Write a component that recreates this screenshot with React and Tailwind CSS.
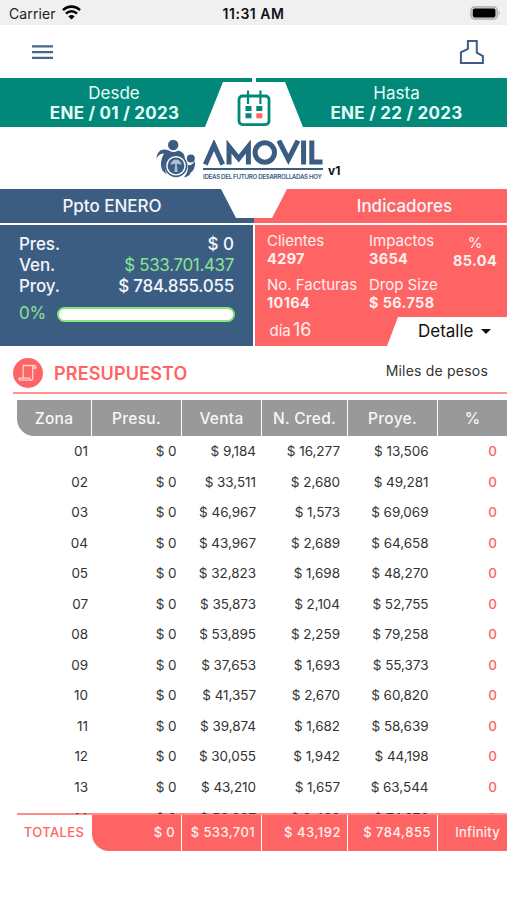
import React from "react";

const COLS = "grid grid-cols-[74px_89px_79px_85px_89px_69px] gap-x-px";

const rows = [
  ["01", "0", "9,184", "16,277", "13,506"],
  ["02", "0", "33,511", "2,680", "49,281"],
  ["03", "0", "46,967", "1,573", "69,069"],
  ["04", "0", "43,967", "2,689", "64,658"],
  ["05", "0", "32,823", "1,698", "48,270"],
  ["07", "0", "35,873", "2,104", "52,755"],
  ["08", "0", "53,895", "2,259", "79,258"],
  ["09", "0", "37,653", "1,693", "55,373"],
  ["10", "0", "41,357", "2,670", "60,820"],
  ["11", "0", "39,874", "1,682", "58,639"],
  ["12", "0", "30,055", "1,942", "44,198"],
  ["13", "0", "43,210", "1,657", "63,544"],
  ["14", "0", "50,337", "2,428", "74,076"],
];

function StatusBar() {
  return (
    <div className="grid h-[25px] grid-cols-3 items-center bg-[#f0f0f0] pt-[2px] text-[14px] text-[#222]">
      <div className="flex items-center gap-[6px] pl-[9px]">
        <span className="tracking-[0.1px]">Carrier</span>
        <svg width="19" height="15" viewBox="0 0 19 15" fill="none" stroke="#000" className="-mt-[2px]">
          <path d="M1 5.2a12 12 0 0 1 17 0" strokeWidth="2.6" />
          <path d="M4 8.6a7.8 7.8 0 0 1 11 0" strokeWidth="2.5" />
          <path d="M9.5 14.6 6.4 11.4a4.5 4.5 0 0 1 6.2 0Z" fill="#000" stroke="none" />
        </svg>
      </div>
      <div className="text-center font-semibold tracking-[0.5px] text-[#111]">11:31 AM</div>
      <div className="flex justify-end pr-[6px]">
        <svg width="31" height="14" viewBox="0 0 31 14" className="-mt-[2px]">
          <rect x="0.9" y="0.8" width="26.4" height="12.4" rx="3.8" fill="#d0d0d0" stroke="#aaa" strokeWidth="1.2" />
          <rect x="2.8" y="2.4" width="22.6" height="9.2" rx="2" fill="#000" />
          <path d="M28.6 4.8q2 2.2 0 4.4Z" fill="#999" />
        </svg>
      </div>
    </div>
  );
}

function Header() {
  return (
    <header className="flex h-[53px] items-center justify-between pl-8 pr-[22px]">
      <svg width="21" height="16" viewBox="0 0 21 16" stroke="#47678f" strokeWidth="2.3">
        <path d="M0 2.4h21M0 8.2h21M0 13.9h21" />
      </svg>
      <svg width="26" height="26" viewBox="0 0 26 26" fill="none" stroke="#3d5d84" strokeWidth="2">
        <path d="M8.9 2h8.9v11.7l6.1 3.3V24H1.9V13.3L8.9 9.8Z" />
      </svg>
    </header>
  );
}

function DateBand() {
  return (
    <section className="flex h-[49px] text-center text-[17px] leading-5 text-[#e4fffb]">
      <div className="h-full w-[252px] shrink-0 bg-[#028878] pt-[5px] [clip-path:polygon(0_0,252px_0,252px_4px,223px_4px,205px_49px,0_49px)]">
        <div className="w-[228px]">Desde</div>
        <div className="w-[229px] font-bold tracking-[0.25px]">ENE / 01 / 2023</div>
      </div>
      <div className="flex w-1 shrink-0 justify-center">
        <svg width="34" height="38" viewBox="0 0 34 38" className="mt-[12px] shrink-0" fill="none" stroke="#028878" strokeWidth="2.8">
          <rect x="2" y="6" width="30" height="28.6" rx="3.5" />
          <path d="M11 0.5v13.5M23.4 0.5v13.5" strokeWidth="2.2" />
          <path d="M8.5 18.4h6M8.5 25.8h6M19.3 18.4h6" strokeWidth="5" />
          <path d="M19.3 25.8h6" stroke="#ff6464" strokeWidth="5" />
        </svg>
      </div>
      <div className="h-full w-[251px] shrink-0 bg-[#028878] pl-[30px] pt-[5px] [clip-path:polygon(0_0,100%_0,100%_100%,47px_100%,29px_4px,0_4px)]">
        <div>Hasta</div>
        <div className="font-bold tracking-[0.25px]">ENE / 22 / 2023</div>
      </div>
    </section>
  );
}

function Logo() {
  return (
    <section className="flex h-[62px] pl-[156px] pt-[11px]">
      <svg width="40" height="42" viewBox="0 0 40 42" fill="none">
        <circle cx="17.200" cy="7" r="5.200" fill="#3c5d82" />
        <circle cx="34.800" cy="20.600" r="4" fill="#3c5d82" />
        <path d="M0.500 20.500C1 13 6 9.500 13 12.500q4.500 3 9 0 6.500 1 7 8l-1 2q-2.500-5-8-5-8 0-10.500 7-2 6 1.500 12-7-4-6-12 .5-5 3-9-5 0-7.500 5Z" fill="#3c5d82" />
        <path d="M39 23q.500 9-4.300 11.500-1 4-7 5 5-5 4-12.500 4 1 7.300-4Z" fill="#3c5d82" />
        <circle cx="20" cy="27.800" r="10.600" fill="#fff" stroke="#3c5d82" strokeWidth="1.600" />
        <circle cx="20" cy="27.800" r="8.400" fill="#3c5d82" />
        <path d="M14.500 27q1-5.500 5.500-5.500t5.500 5.500q-2.500-1.500-5.500-1-3-.5-5.500 1ZM19.200 26h1.600l.8 8h-3.200Z" fill="#a9bfd6" />
      </svg>
      <div className="ml-[7px] w-[120px] pt-[2px]">
        <svg width="120" height="26" viewBox="0 0 120 26" fill="none" stroke="#3c5d82" strokeWidth="5">
          <path d="M2.300 24.500 11 5 19.700 24.500M26 24.500V6.500L35.700 18.500 45.400 6.500V24.500M75.800 0.500 85.400 19.500 95 0.500M100.600 0.500V24.500M108.800 0.500V22H119.500" />
          <circle cx="61.800" cy="12.500" r="9.700" />
        </svg>
        <div className="mt-[2px] h-[2px] bg-[#3c5d82]" />
        <div className="mt-[2px] whitespace-nowrap text-[6.2px] font-semibold leading-[9px] tracking-[-0.31px] text-[#3c5d82]">
          IDEAS DEL FUTURO DESARROLLADAS HOY
        </div>
      </div>
      <div className="ml-[5px] mt-[25px] text-[12px] font-bold leading-[16px] text-[#111]">v1</div>
    </section>
  );
}

function Tabs() {
  return (
    <section className="flex h-[34px] text-center text-[17px] font-medium leading-[34px] text-[#f3f5fa]">
      <div className="w-[254px] bg-[#3c5d82] [clip-path:polygon(0_0,221px_0,236px_29px,254px_29px,254px_100%,0_100%)]">
        <div className="w-[224px]">Ppto ENERO</div>
      </div>
      <div className="flex-1 bg-[#ff6464] [clip-path:polygon(33px_0,100%_0,100%_100%,0_100%,0_29px,18px_29px)]">
        <div className="ml-[50px] w-[201px]">Indicadores</div>
      </div>
    </section>
  );
}

function Indicator({ label, value }) {
  return (
    <div className="whitespace-nowrap">
      <div className="text-[15px] leading-[18px]">{label}</div>
      <div className="text-[14.5px] font-bold leading-[18px] tracking-[0.35px]">{value}</div>
    </div>
  );
}

function Panels() {
  return (
    <section className="mt-[2px] flex h-[121px]">
      <div className="w-[253px] bg-[#3c5d82] px-[19px] pt-[8.5px] text-[17px] font-medium leading-[21.3px] text-[#f3f5fa]">
        <div className="flex justify-between"><span className="tracking-[-0.1px]">Pres.</span><span>$ 0</span></div>
        <div className="flex justify-between"><span className="tracking-[-0.1px]">Ven.</span><span className="font-normal tracking-[-0.35px] text-[#86e594]">$ 533.701.437</span></div>
        <div className="flex justify-between"><span className="tracking-[-0.1px]">Proy.</span><span className="tracking-[-0.25px]">$ 784.855.055</span></div>
        <div className="mt-[6px] flex items-center justify-between">
          <span className="font-normal tracking-[-0.3px] text-[#86e594]">0%</span>
          <div className="-mr-px mt-px h-[15px] w-[178px] rounded-full border-2 border-[#86e57f] bg-white" />
        </div>
      </div>
      <div className="ml-[1.5px] flex flex-1 flex-col bg-[#ff6464] pt-[7px] text-[#fff0ee]">
        <div className="grid grid-cols-[102px_83px_1fr] gap-y-[6.5px] pl-[12.5px]">
          <Indicator label="Clientes" value="4297" />
          <Indicator label="Impactos" value="3654" />
          <div className="w-[46px] pt-[1.5px] text-center"><Indicator label="%" value="85.04" /></div>
          <Indicator label="No. Facturas" value="10164" />
          <Indicator label="Drop Size" value="$ 56.758" />
        </div>
        <div className="mt-auto flex h-[29px] justify-between">
          <div className="pl-[15px] text-[15px] leading-[25px]">día <span className="-ml-[2px] text-[18px]">16</span></div>
          <div className="flex w-[120px] items-center gap-[7px] bg-white pl-[31px] text-[17px] text-[#111] [clip-path:polygon(11px_0,100%_0,100%_100%,0_100%)]">
            <span>Detalle</span>
            <div className="h-0 w-0 border-x-[5px] border-t-[5px] border-x-transparent border-t-[#111]" />
          </div>
        </div>
      </div>
    </section>
  );
}

function Title() {
  return (
    <section className="ml-[13px]">
      <div className="flex h-[46px] items-center pt-[8px]">
        <div className="flex h-[30px] w-[30px] items-center justify-center rounded-full bg-[#ff6464]">
          <svg width="20" height="20" viewBox="0 0 20 20" fill="none" stroke="#ffd2cd" strokeWidth="1.3">
            <path d="M5.200 15V2.500h11.200q1.500 0 1.500 2.500h-3.200M14.700 3v12.200q0 2-1.800 2H3q-2 0-2-2h10.700q0 2 1.600 2" />
          </svg>
        </div>
        <h1 className="ml-[11px] text-[18px] font-semibold tracking-[0.15px] text-[#ff6464]">PRESUPUESTO</h1>
        <span className="-mt-[5px] ml-auto mr-[19px] text-[14px] tracking-[0.2px] text-[#333]">Miles de pesos</span>
      </div>
      <div className="h-[2px] bg-[#ff9292]" />
    </section>
  );
}

function TableHead() {
  return (
    <div className={COLS + " ml-[17px] mt-[6px] h-[36px] overflow-hidden rounded-bl-[17px] text-center text-[15.5px] font-medium leading-[37px] tracking-[0.3px] text-[#f7f7f7]"}>
      <div className="bg-[#999]">Zona</div>
      <div className="bg-[#999]">Presu.</div>
      <div className="bg-[#999]">Venta</div>
      <div className="bg-[#999]">N. Cred.</div>
      <div className="bg-[#999]">Proye.</div>
      <div className="bg-[#999]">%</div>
    </div>
  );
}

function TableBody() {
  return (
    <div className="relative z-10 ml-[17px] h-[378px] overflow-hidden text-right text-[13.5px] leading-[30.5px] tracking-[-0.05px] text-[#333]">
      {rows.map(([zona, presu, venta, cred, proye]) => (
        <div key={zona} className={COLS + " h-[30.55px]"}>
          <div className="pr-[3px]">{zona}</div>
          <div className="pr-[4.5px]">$ {presu}</div>
          <div className="pr-[5px]">$ {venta}</div>
          <div className="pr-[7px]">$ {cred}</div>
          <div className="pr-[8.5px]">$ {proye}</div>
          <div className="pr-[10px] font-medium text-[#ff6464]">0</div>
        </div>
      ))}
    </div>
  );
}

function Totals() {
  return (
    <div className="-mt-[1px] ml-[17px]">
      <div className="h-[2px] bg-[#ff8a8a]" />
      <div className={COLS + " h-[36px] text-right text-[13px] font-medium leading-[35px] tracking-[0.35px] text-[#fff0ee]"}>
        <div className="text-center text-[#ff6464]">TOTALES</div>
        <div className="rounded-bl-[17px] bg-[#ff6464] pr-[6px]">$ 0</div>
        <div className="bg-[#ff6464] pr-[6px] tracking-[0.4px]">$ 533,701</div>
        <div className="bg-[#ff6464] pr-[6px] tracking-[0.55px]">$ 43,192</div>
        <div className="bg-[#ff6464] pr-[6px] tracking-[0.5px]">$ 784,855</div>
        <div className="bg-[#ff6464] pr-[7px] tracking-[0.25px]">Infinity</div>
      </div>
    </div>
  );
}

export default function App() {
  return (
    <main className="h-[900px] w-[507px] overflow-hidden bg-white font-['Inter',sans-serif]">
      <StatusBar />
      <Header />
      <DateBand />
      <Logo />
      <Tabs />
      <Panels />
      <Title />
      <TableHead />
      <TableBody />
      <Totals />
    </main>
  );
}
